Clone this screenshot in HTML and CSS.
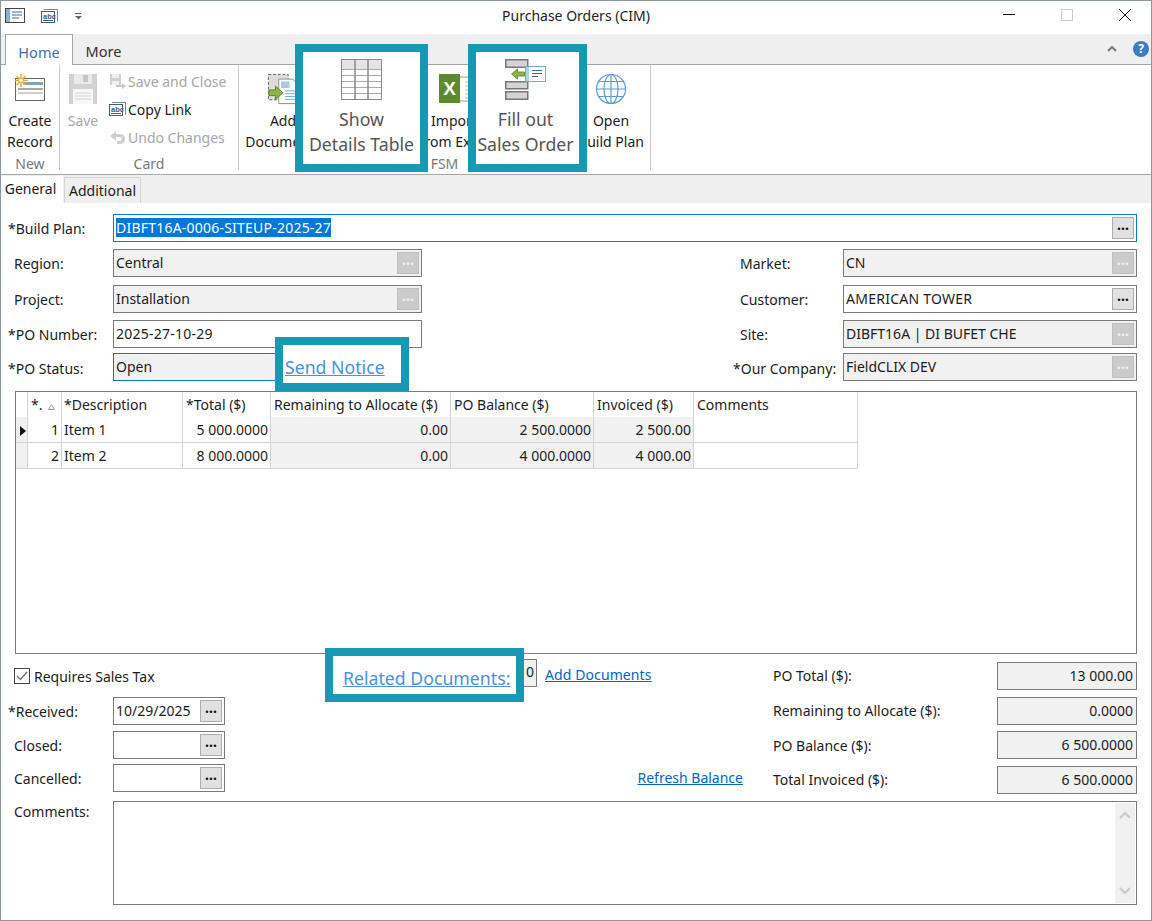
FILE: index.html
```html
<!DOCTYPE html>
<html lang="en">
<head>
<meta charset="utf-8">
<title>Purchase Orders (CIM)</title>
<link rel="stylesheet" href="styles.css">
</head>
<body>
<div class="window">
  <header class="titlebar">
    <div class="qat">
      <svg class="qat-app" width="21" height="16" viewBox="0 0 21 16"><rect x=".5" y=".5" width="19" height="14" fill="#fff" stroke="#444"/><rect x="1" y="1" width="4" height="13" fill="#7fb5dc"/><path d="M7 4h10M7 7h10M7 10h7" stroke="#3a6fa5" fill="none"/></svg>
      <svg class="qat-abc" width="17" height="15" viewBox="0 0 17 15"><path d="M3 .5h13.500v12" fill="none" stroke="#6a8aa5"/><rect x=".5" y="2.500" width="13" height="11" fill="#fff" stroke="#3d5d7a"/><text x="2" y="10" class="abc">abc</text><path d="M2 11.500h10" stroke="#3d5d7a"/></svg>
      <svg class="qat-drop" width="7" height="7" viewBox="0 0 7 7"><path d="M0 .5h6" stroke="#666"/><path d="M0 3h7L3.500 6.500z" fill="#666"/></svg>
    </div>
    <div class="title">Purchase Orders (CIM)</div>
    <div class="controls">
      <svg width="14" height="14" viewBox="0 0 14 14"><path d="M1 6.500h12" stroke="#111"/></svg>
      <svg width="14" height="14" viewBox="0 0 14 14"><rect x="1.500" y="1.500" width="11" height="11" fill="none" stroke="#ccc"/></svg>
      <svg width="14" height="14" viewBox="0 0 14 14"><path d="M1 1l12 12M13 1L1 13" stroke="#111" fill="none"/></svg>
    </div>
  </header>

  <nav class="ribbon-tabs">
    <div class="rtab rtab-active">Home</div>
    <div class="rtab">More</div>
    <div class="ribbon-end">
      <svg width="10" height="6" viewBox="0 0 10 6"><path d="M1 5l4-4 4 4" fill="none" stroke="#777" stroke-width="2"/></svg>
      <div class="help">?</div>
    </div>
  </nav>

  <section class="ribbon">
    <div class="group group-new">
      <div class="group-body">
        <div class="large large-new">
          <svg class="licon" width="32" height="32" viewBox="0 0 32 32"><rect x="1.500" y="5.500" width="29" height="22" fill="#fff" stroke="#666"/><rect x="9" y="9" width="20" height="3" fill="#7fa3b8"/><rect x="4" y="15" width="25" height="2" fill="#a9a9a9"/><rect x="4" y="19" width="25" height="2" fill="#cfcfcf"/><path d="M7 1v13M1 7.500h13M2.500 3l9 9M11.500 3l-9 9" stroke="#f0a830" stroke-width="1.500"/><circle cx="7" cy="7.500" r="2.500" fill="#fff3d0" stroke="#e6a020"/></svg>
          <span>Create<br>Record</span>
        </div>
      </div>
      <div class="group-label">New</div>
    </div>
    <div class="group group-card">
      <div class="group-body">
        <div class="large large-save disabled">
          <svg class="licon" width="32" height="32" viewBox="0 0 32 32"><path d="M2 1h28v30H2z" fill="#d2d2d2"/><rect x="7" y="1" width="18" height="10" fill="#eaeaea"/><rect x="16" y="2" width="5" height="7" fill="#c6c6c6"/><rect x="6" y="16" width="20" height="15" fill="#f7f7f7"/><path d="M8 20h16M8 23h16M8 26h16" stroke="#d2d2d2"/></svg>
          <span>Save</span>
        </div>
        <div class="smalls">
          <div class="small disabled">
            <svg width="17" height="17" viewBox="0 0 17 17"><path d="M1 1h11v11H1z" fill="#cfcfcf"/><rect x="3" y="1" width="7" height="4" fill="#efefef"/><rect x="3" y="8" width="7" height="4" fill="#efefef"/><path d="M7 12h6V10l4 3-4 3v-2H7z" fill="#c8c8c8"/></svg>
            <span>Save and Close</span>
          </div>
          <div class="small">
            <svg width="17" height="15" viewBox="0 0 17 15"><path d="M3 .5h13.500v12" fill="none" stroke="#6a8aa5"/><rect x=".5" y="2.500" width="13" height="11" fill="#fff" stroke="#3d5d7a"/><text x="2" y="10" class="abc">abc</text><path d="M2 11.500h10" stroke="#3d5d7a"/></svg>
            <span>Copy Link</span>
          </div>
          <div class="small disabled">
            <svg width="17" height="17" viewBox="0 0 17 17"><path d="M1 7l6-5v3h4c4 0 5 3 5 5 0 3-2 5-5 5H8v-3h3c2 0 2-4 0-4H7v4z" fill="#cfcfcf"/></svg>
            <span>Undo Changes</span>
          </div>
        </div>
      </div>
      <div class="group-label">Card</div>
    </div>
    <div class="group group-fsm">
      <div class="group-body">
        <div class="large large-add">
          <svg class="licon" width="32" height="34" viewBox="0 0 32 34"><rect x=".5" y="1.500" width="21" height="27" fill="#dcdcdc" stroke="#555" stroke-dasharray="3 2"/><path d="M11.500 6.500h15l4 4v22h-19z" fill="#fff" stroke="#888"/><rect x="14" y="9" width="9" height="7" fill="#a9cbe0"/><path d="M18 19h11M18 22h11M18 25h11M18 28h11" stroke="#7ea4bf"/><path d="M1 18h7v-4l8 7-8 7v-4H1z" fill="#8cb446" stroke="#5d7f2a"/></svg>
          <span>Add<br>Documents</span>
        </div>
        <div class="under-callout under-one"></div>
        <div class="large large-import">
          <svg class="licon icon-xl" width="42" height="30" viewBox="0 0 42 30"><path d="M20 3h21v24H20z" fill="#fff" stroke="#999"/><path d="M26 8h13M26 12h13M26 16h13M26 20h13M26 24h13M30 4v23M35 4v23" stroke="#bbb"/><rect width="21" height="29" fill="#5e8a2c"/><text x="10.500" y="21" class="xl">X</text></svg>
          <span>Import<br>from Excel</span>
        </div>
        <div class="under-callout under-two"></div>
        <div class="large large-open">
          <svg class="licon" width="32" height="32" viewBox="0 0 32 32"><g fill="none" stroke="#5b9bd5" stroke-width="1.200"><circle cx="16" cy="16" r="14.500"/><ellipse cx="16" cy="16" rx="7" ry="14.500"/><path d="M16 1.500v29M1.500 16h29M3.500 8.500h25M3.500 23.500h25"/></g></svg>
          <span>Open<br>Build Plan</span>
        </div>
      </div>
      <div class="group-label label-fsm">FSM</div>
    </div>
  </section>

  <nav class="page-tabs">
    <div class="ptab ptab-active">General</div>
    <div class="ptab">Additional</div>
  </nav>

  <main class="page">
    <div class="form">
      <label class="lbl req">*Build Plan:</label>
      <div class="field field-focus span-all"><span class="selected">DIBFT16A-0006-SITEUP-2025-27</span><span class="dots">&#8230;</span></div>

      <label class="lbl">Region:</label>
      <div class="field ro">Central<span class="dots off">&#8230;</span></div>
      <span></span>
      <label class="lbl rlbl">Market:</label>
      <div class="field ro">CN<span class="dots off">&#8230;</span></div>

      <label class="lbl">Project:</label>
      <div class="field ro">Installation<span class="dots off">&#8230;</span></div>
      <span></span>
      <label class="lbl rlbl">Customer:</label>
      <div class="field wide-text">AMERICAN TOWER<span class="dots">&#8230;</span></div>

      <label class="lbl req">*PO Number:</label>
      <div class="field wide-text">2025-27-10-29</div>
      <span></span>
      <label class="lbl rlbl">Site:</label>
      <div class="field ro">DIBFT16A | DI BUFET CHE<span class="dots off">&#8230;</span></div>

      <label class="lbl req lower-lbl">*PO Status:</label>
      <div class="field ro field-focus status">Open</div>
      <span></span>
      <label class="lbl rlbl req-right lower-lbl">*Our Company:</label>
      <div class="field ro">FieldCLIX DEV<span class="dots off">&#8230;</span></div>
    </div>

    <div class="gridbox">
      <table class="items">
        <colgroup>
          <col class="c0"><col class="c1"><col class="c2"><col class="c3"><col class="c4"><col class="c5"><col class="c6"><col class="c7">
        </colgroup>
        <thead>
          <tr>
            <th></th>
            <th class="sort">*.<svg width="7" height="6" viewBox="0 0 7 6"><path d="M3.500.5L6.500 5.500H.5z" fill="none" stroke="#999"/></svg></th>
            <th class="desc">*Description</th>
            <th>*Total ($)</th>
            <th>Remaining to Allocate ($)</th>
            <th>PO Balance ($)</th>
            <th>Invoiced ($)</th>
            <th>Comments</th>
          </tr>
        </thead>
        <tbody>
          <tr>
            <td class="ind"><svg width="6" height="10" viewBox="0 0 6 10"><path d="M0 0l6 5-6 5z" fill="#111"/></svg></td>
            <td class="num">1</td><td>Item 1</td><td class="num">5 000.0000</td>
            <td class="num shade">0.00</td><td class="num shade">2 500.0000</td><td class="num shade">2 500.00</td><td></td>
          </tr>
          <tr>
            <td class="ind"></td>
            <td class="num">2</td><td>Item 2</td><td class="num">8 000.0000</td>
            <td class="num shade">0.00</td><td class="num shade">4 000.0000</td><td class="num shade">4 000.00</td><td></td>
          </tr>
        </tbody>
      </table>
    </div>

    <div class="lower">
      <div class="check-wrap">
        <svg width="17" height="17" viewBox="0 0 17 17"><rect x=".5" y=".5" width="15" height="15" fill="#fff" stroke="#444"/><path d="M3 8l3.500 3.500L13 4" fill="none" stroke="#777" stroke-width="1.500"/></svg>
        <span>Requires Sales Tax</span>
      </div>
      <div class="doc-links">
        <div class="count">0</div>
        <a class="link link-add">Add Documents</a>
      </div>
      <label class="lbl blbl up">PO Total ($):</label>
      <div class="field ro right">13 000.00</div>

      <label class="lbl req">*Received:</label>
      <div class="field">10/29/2025<span class="dots">&#8230;</span></div>
      <span></span>
      <label class="lbl blbl up">Remaining to Allocate ($):</label>
      <div class="field ro right">0.0000</div>

      <label class="lbl">Closed:</label>
      <div class="field"><span class="dots">&#8230;</span></div>
      <span></span>
      <label class="lbl blbl">PO Balance ($):</label>
      <div class="field ro right">6 500.0000</div>

      <label class="lbl">Cancelled:</label>
      <div class="field"><span class="dots">&#8230;</span></div>
      <div class="refresh"><a class="link">Refresh Balance</a></div>
      <label class="lbl blbl lower-lbl">Total Invoiced ($):</label>
      <div class="field ro right low">6 500.0000</div>
    </div>

    <div class="comments">
      <label class="lbl memo-lbl">Comments:</label>
      <div class="memo">
        <div class="scroll">
          <svg width="14" height="8" viewBox="0 0 14 8"><path d="M2 7l5-5 5 5" fill="none" stroke="#c8c8c8" stroke-width="2"/></svg>
          <svg width="14" height="8" viewBox="0 0 14 8"><path d="M2 1l5 5 5-5" fill="none" stroke="#c8c8c8" stroke-width="2"/></svg>
        </div>
      </div>
    </div>
  </main>

  <div class="callout call-table">
    <svg width="41" height="41" viewBox="0 0 41 41"><rect x=".5" y=".5" width="40" height="40" fill="#fff" stroke="#8a8a8a"/><rect x="1" y="1" width="39" height="9" fill="#e4e4e4"/><path d="M1 10.500h39M1 16.500h39M1 22.500h39M1 28.500h39M1 34.500h39" stroke="#aaa"/><path d="M14 1v39M27 1v39" stroke="#8a8a8a" stroke-width="1.500"/></svg>
    <div class="call-text">Show<br>Details Table</div>
  </div>
  <div class="callout call-fill">
    <svg width="41" height="41" viewBox="0 0 41 41"><g fill="#d4d4d4" stroke="#777" stroke-width="1.500"><rect x=".75" y=".75" width="22" height="7.500"/><rect x=".75" y="22.750" width="22" height="7"/><rect x=".75" y="32.750" width="22" height="7.500"/></g><rect x="20.500" y="7.500" width="20" height="15" fill="#fff" stroke="#7aa9c7"/><rect x="21" y="8" width="3" height="14" fill="#a9d3ee"/><path d="M27 11.500h10M27 14.500h10M27 17.500h6" stroke="#4a6a85"/><path d="M6.500 15l6-5v3h7v4h-7v3z" fill="#8cb446" stroke="#6c9234"/></svg>
    <div class="call-text">Fill out<br>Sales Order</div>
  </div>
  <div class="callout call-notice"><a class="call-link">Send Notice</a></div>
  <div class="callout call-docs"><a class="call-link">Related Documents:</a></div>
</div>
</body>
</html>
```

FILE: styles.css
```css
* { box-sizing: border-box; }
html, body { margin: 0; padding: 0; }
body {
  width: 1152px;
  height: 921px;
  overflow: hidden;
  background: #fff;
  font-family: "Noto Sans", "Open Sans", sans-serif;
  font-size: 14px;
  color: #1c1c1c;
}
.window {
  position: relative;
  width: 1152px;
  height: 921px;
  border: 1px solid #8c979e;
  background: #fff;
  overflow: hidden;
}
.abc { font-family: "Liberation Sans", sans-serif; font-size: 7.500px; font-weight: 700; fill: #3d5d7a; }
.xl { font-family: "Liberation Sans", sans-serif; font-size: 19px; font-weight: 700; fill: #fff; text-anchor: middle; }

/* title bar */
.titlebar {
  position: relative;
  display: flex;
  align-items: center;
  justify-content: center;
  height: 33px;
}
.qat { position: absolute; left: 4px; top: 7px; display: flex; align-items: center; }
.qat-abc { margin-left: 15px; }
.qat-drop { margin-left: 17px; }
.title { font-size: 14px; color: #222; margin-top: -4px; }
.controls { position: absolute; right: 19px; top: 7px; display: flex; gap: 44px; }

/* ribbon */
.ribbon-tabs {
  display: flex;
  height: 31px;
  padding-left: 4px;
  background: #efefef;
  border-bottom: 1px solid #a6a6a6;
}
.rtab {
  width: 61px;
  height: 31px;
  text-align: center;
  line-height: 34px;
  font-size: 14.500px;
  color: #333;
}
.rtab-active {
  width: 68px;
  background: #fff;
  border: 1px solid #a6a6a6;
  border-bottom: 0;
  color: #3b6cb0;
}
.ribbon-end { margin-left: auto; display: flex; align-items: center; gap: 16px; padding-right: 2px; }
.help {
  width: 16px;
  height: 16px;
  border-radius: 50%;
  background: #3b7cc4;
  color: #fff;
  font-size: 12px;
  font-weight: 700;
  line-height: 16px;
  text-align: center;
}
.ribbon {
  display: flex;
  height: 110px;
  border-bottom: 1px solid #a6a6a6;
  padding-bottom: 4px;
}
.group {
  display: flex;
  flex-direction: column;
  border-right: 1px solid #c8c8c8;
}
.group-new { width: 59px; }
.group-card { width: 179px; }
.group-fsm { width: 412px; }
.group-body { display: flex; height: 92px; }
.group-label {
  height: 13px;
  line-height: 14px;
  text-align: center;
  color: #777;
  font-size: 14px;
}
.large {
  display: flex;
  flex-direction: column;
  align-items: center;
  flex: none;
  padding-top: 8px;
  line-height: 21px;
  text-align: center;
  white-space: nowrap;
}
.licon { height: 32px; margin-bottom: 5px; flex: none; }
.large-new { width: 58px; }
.large-save { width: 46px; }
.large-add { width: 88px; }
.large-import { width: 68px; }
.large-open { width: 72px; }
.icon-xl { margin-left: 12px; }
.under-one { width: 93px; }
.under-two { width: 87px; }
.disabled { color: #a6a6a6; }
.smalls { margin-left: 3px; padding-top: 2px; }
.small { display: flex; align-items: center; gap: 2px; height: 28px; white-space: nowrap; }
.small svg { flex: none; }

/* page tabs */
.page-tabs {
  display: flex;
  align-items: flex-end;
  height: 28px;
  background: #efefef;
}
.ptab {
  height: 26px;
  width: 77px;
  margin-left: 1px;
  padding-top: 2px;
  text-align: center;
  border: 1px solid #d4d4d4;
  border-bottom: 0;
  line-height: 22px;
}
.ptab-active {
  width: 62px;
  height: 27px;
  margin-left: 0;
  background: #fff;
  border: 0;
  line-height: 22px;
  padding-top: 2px;
  padding-right: 3px;
}

/* form */
.form {
  display: grid;
  grid-template-columns: 105px 309px 311px 110px 294px;
  grid-template-rows: 35px 36px 35px 33px 38px;
  padding: 11px 0 0 7px;
}
.lbl {
  display: block;
  padding-left: 6px;
  line-height: 30px;
  white-space: nowrap;
}
.req { padding-left: 0; }
.rlbl { padding-left: 7px; }
.req-right { padding-left: 0; }
.blbl { padding-left: 0; }
.up { line-height: 28px; }
.lower-lbl { line-height: 32px; }
.field {
  position: relative;
  display: block;
  height: 28px;
  padding-left: 2px;
  border: 1px solid #7a7a7a;
  background: #fff;
  line-height: 25px;
  white-space: nowrap;
}
.wide-text { letter-spacing: .25px; }
.status { width: 175px; }
.span-all { grid-column: 2 / 6; }
.ro { background: #f1f1f1; }
.field-focus { border-color: #0078d7; }
.selected {
  display: inline-block;
  height: 19px;
  background: #0078d7;
  color: #fff;
  line-height: 19px;
  letter-spacing: .22px;
}
.right { text-align: right; padding-right: 3px; padding-left: 0; }
.dots {
  position: absolute;
  right: 2px;
  top: 2px;
  width: 22px;
  height: 22px;
  border: 1px solid #adadad;
  background: #e1e1e1;
  color: #111;
  font-size: 14px;
  font-weight: 700;
  line-height: 14px;
  letter-spacing: 0;
  text-align: center;
}
.off { background: #cbcbcb; border-color: #bfbfbf; color: #f1f1f1; }

/* grid */
.gridbox {
  width: 1122px;
  height: 263px;
  margin-left: 14px;
  border: 1px solid #7a7a7a;
}
.items {
  width: 842px;
  table-layout: fixed;
  border-collapse: separate;
  border-spacing: 0;
}
.c0 { width: 12px; }
.c1 { width: 34px; }
.c2 { width: 121px; }
.c3 { width: 88px; }
.c4 { width: 180px; }
.c5 { width: 143px; }
.c6 { width: 100px; }
.c7 { width: 164px; }
.items th, .items td {
  padding: 0 2px;
  border-right: 1px solid #d3d3d3;
  white-space: nowrap;
  overflow: hidden;
}
.items th {
  height: 25px;
  padding-left: 3px;
  text-align: left;
  font-weight: 400;
}
.items .desc { padding-left: 2px; }
.items td {
  height: 26px;
  border-bottom: 1px solid #d3d3d3;
}
.items .ind { background: #f0f0f0; padding: 2px 0 0 4px; }
.items .num { text-align: right; }
.items .shade { background: #f1f1f1; }
.sort svg { margin-left: 6px; }

/* lower form */
.lower {
  display: grid;
  grid-template-columns: 105px 112px 548px 224px 140px;
  grid-template-rows: 35px 34px 33px 37px;
  padding: 8px 0 0 7px;
}
.check-wrap {
  grid-column: 1 / 3;
  display: flex;
  align-items: center;
  gap: 3px;
  height: 28px;
  padding-left: 6px;
}
.doc-links {
  display: flex;
  align-items: center;
  gap: 8px;
  height: 28px;
  margin-top: -3px;
  padding-left: 290px;
}
.count {
  width: 22px;
  height: 28px;
  padding-right: 2px;
  border: 1px solid #7a7a7a;
  background: #f1f1f1;
  text-align: right;
  line-height: 24px;
  flex: none;
}
.link { color: #0066cc; text-decoration: underline; white-space: nowrap; }
.link-add { margin-top: 3px; letter-spacing: .1px; }
.refresh { text-align: right; padding-right: 30px; line-height: 28px; }
.low { margin-top: 2px; }

/* comments */
.comments {
  display: grid;
  grid-template-columns: 105px 1024px;
  padding-left: 7px;
}
.memo-lbl { line-height: 22px; }
.memo {
  position: relative;
  height: 104px;
  border: 1px solid #7a7a7a;
}
.scroll {
  position: absolute;
  right: 1px;
  top: 1px;
  bottom: 1px;
  width: 20px;
  background: #f0f0f0;
  display: flex;
  flex-direction: column;
  align-items: center;
  justify-content: space-between;
  padding: 8px 0;
}

/* teal callouts over the screenshot */
.callout {
  position: absolute;
  border: 8px solid #1699b2;
  background: #fff;
  color: #555;
  text-align: center;
}
.call-text { font-size: 17.700px; line-height: 25px; margin-top: 7px; white-space: nowrap; }
.callout svg { display: block; margin: 7px auto 0; }
.call-table { left: 294px; top: 43px; width: 133px; height: 128px; }
.call-fill { left: 467px; top: 43px; width: 119px; height: 128px; padding-right: 4px; }
.call-notice { left: 274px; top: 336px; width: 134px; height: 54px; text-align: left; padding-left: 2px; }
.call-docs { left: 324px; top: 647px; width: 199px; height: 54px; text-align: left; padding-left: 10px; }
.call-link {
  color: #4a90e2;
  font-size: 17.700px;
  line-height: 44px;
  text-decoration: underline;
  white-space: nowrap;
}
```
